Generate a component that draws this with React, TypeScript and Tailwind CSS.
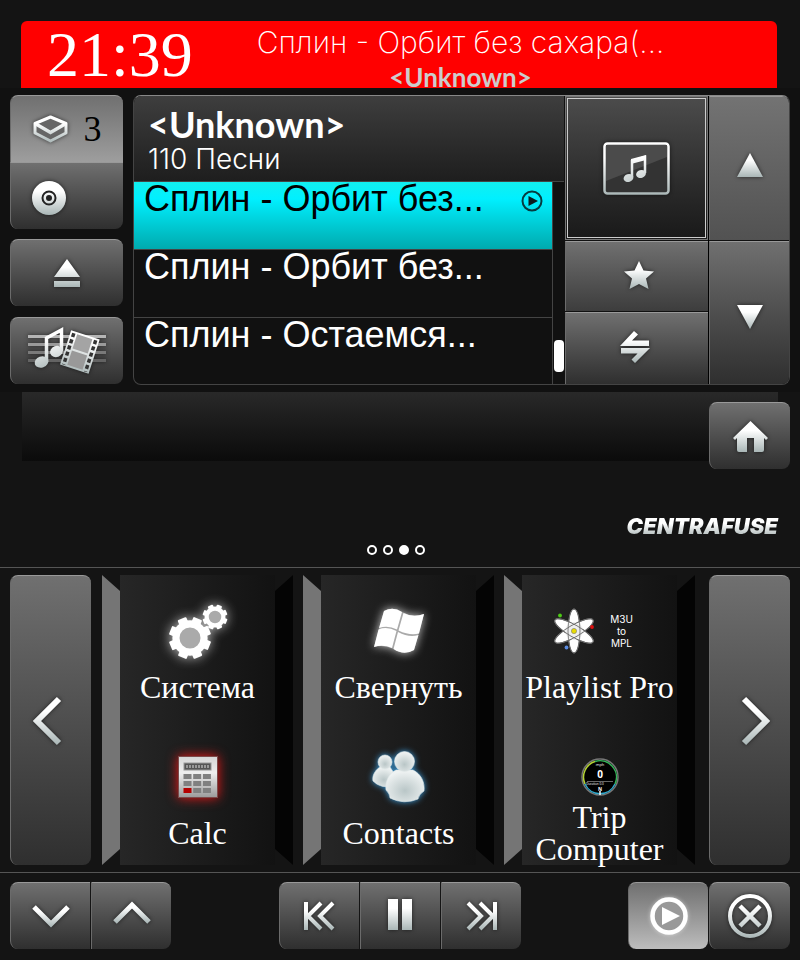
import { useId, useState, type ReactNode } from "react";
import clsx from "clsx";

interface IconProps {
  width: number;
  height: number;
  children: (paint: string) => ReactNode;
  className?: string;
}

// Light-to-steel vertical gradient shared by every control glyph
function Icon({ width, height, children, className }: IconProps) {
  const id = useId();
  return (
    <svg
      width={width}
      height={height}
      viewBox={`0 0 ${width} ${height}`}
      fill="none"
      aria-hidden="true"
      className={clsx("shrink-0 overflow-visible drop-shadow-[0_0_2px_#0009]", className)}
    >
      <defs>
        <linearGradient id={id} gradientUnits="userSpaceOnUse" x1="0" y1="0" x2="0" y2={height}>
          <stop offset="0.3" stopColor="#ffffff" />
          <stop offset="1" stopColor="#a9b6b6" />
        </linearGradient>
      </defs>
      {children(`url(#${id})`)}
    </svg>
  );
}

interface KeyProps {
  label: string;
  className?: string;
  onClick?: () => void;
  children: ReactNode;
}

function Key({ label, className, onClick, children }: KeyProps) {
  return (
    <button
      type="button"
      aria-label={label}
      onClick={onClick}
      className={clsx(
        "flex items-center justify-center border-t border-l border-t-[#999] border-l-[#6b6b6b] bg-linear-to-b from-[#707070] to-[#2f2f2f]",
        className,
      )}
    >
      {children}
    </button>
  );
}

function Gear({ cx, cy, r, teeth }: { cx: number; cy: number; r: number; teeth: number }) {
  return (
    <g>
      {Array.from({ length: teeth }, (_, i) => (
        <rect
          key={i}
          x={cx - r * 0.22}
          y={cy - r}
          width={r * 0.44}
          height={r * 0.5}
          rx="1"
          fill="#fff"
          transform={`rotate(${(i * 360) / teeth + 22} ${cx} ${cy})`}
        />
      ))}
      <circle cx={cx} cy={cy} r={r * 0.67} fill="#aaa" stroke="#fff" strokeWidth={r * 0.34} />
    </g>
  );
}

function GearsIcon() {
  return (
    <svg width="60" height="56" viewBox="0 0 60 56" aria-hidden="true" className="overflow-visible drop-shadow-[0_0_6px_#ffffffb0]">
      <Gear cx={22} cy={35} r={21} teeth={8} />
      <Gear cx={47} cy={14} r={12.5} teeth={8} />
    </svg>
  );
}

function FlagIcon() {
  return (
    <svg width="50" height="46" viewBox="0 0 50 46" aria-hidden="true" fill="#fff" className="overflow-visible drop-shadow-[0_0_5px_#ffffffc0]">
      <path d="M0 39L10 3Q19-2 28 4Q39 10 50 6L40 42Q30 48 20 41Q9 36 0 39Z" fill="#aaa" />
      <path d="M10 3Q19-2 28 4L23 21.500Q14 17 5 20Z" />
      <path d="M29.500 5Q39 10 50 6L45 25.500Q36 28 24.500 22.500Z" />
      <path d="M4.500 21.500Q13 18 22.500 23L18 40Q9 36 0 39Z" />
      <path d="M24 24Q35 30 44.500 27L40 42Q30 48 19.500 41Z" />
    </svg>
  );
}

function AtomIcon() {
  return (
    <svg width="40" height="46" viewBox="0 0 40 46" aria-hidden="true">
      {[0, 60, 120].map((angle) => (
        <ellipse key={angle} cx="20" cy="23" rx="6" ry="22" fill="#fff" stroke="#777" transform={`rotate(${angle} 20 23)`} />
      ))}
      <circle cx="20" cy="23" r="9" fill="#eee" />
      {[0, 60, 120].map((angle) => (
        <ellipse key={angle} cx="20" cy="23" rx="6" ry="22" fill="none" stroke="#666" strokeWidth="0.8" transform={`rotate(${angle} 20 23)`} />
      ))}
      <circle cx="20" cy="23" r="2.6" fill="#e8dc00" stroke="#777" strokeWidth="0.6" />
      <circle cx="6" cy="7.500" r="1.9" fill="#4ccc14" />
      <circle cx="38" cy="19" r="1.900" fill="#e01010" />
      <circle cx="12.500" cy="39.500" r="1.900" fill="#5b8be0" />
    </svg>
  );
}

function CalcIcon() {
  return (
    <svg width="40" height="42" viewBox="0 0 40 42" aria-hidden="true" className="overflow-visible drop-shadow-[0_0_6px_#f01818]">
      <defs>
        <linearGradient id="calc-body" x1="0" y1="0" x2="0" y2="1">
          <stop offset="0" stopColor="#d6d6d6" />
          <stop offset="0.4" stopColor="#efefef" />
          <stop offset="1" stopColor="#9b9b9b" />
        </linearGradient>
      </defs>
      <rect x="0.500" y="0.500" width="39" height="41" fill="url(#calc-body)" stroke="#7d4a4a" />
      <rect x="6" y="7" width="27" height="7" fill="#555" stroke="#999" />
      <path d="M8 10.500H31" stroke="#999" strokeWidth="3" strokeDasharray="2 1" />
      {[0, 1, 2].map((row) =>
        [0, 1, 2].map((col) => (
          <rect
            key={`${row}${col}`}
            x={5.5 + col * 9.7}
            y={18 + row * 7}
            width="8"
            height="5"
            fill={row === 2 && col === 0 ? "#b40000" : "#808080"}
          />
        )),
      )}
    </svg>
  );
}

function PeopleIcon() {
  return (
    <svg width="54" height="52" viewBox="0 0 54 52" aria-hidden="true" className="overflow-visible drop-shadow-[0_0_3px_#3d9fe0]">
      <defs>
        <radialGradient id="people-body" cx="0.5" cy="0.65" r="0.6">
          <stop offset="0" stopColor="#b9c6c7" />
          <stop offset="1" stopColor="#eef2f2" />
        </radialGradient>
      </defs>
      <g fill="url(#people-body)" stroke="#dfe7e8" strokeWidth="0.6">
        <path d="M8 16C2 20 0 26 1 30Q9 38 21 35Q26 26 18 16Z" />
        <circle cx="13" cy="11" r="7" />
        <path d="M24 19C16 23 13 32 14 39Q18 43 18 47Q32 54 46 48Q47 43 52 40C53 31 49 23 41 19Z" />
        <circle cx="32.500" cy="10.500" r="10" />
      </g>
    </svg>
  );
}

function GaugeIcon() {
  return (
    <svg width="38" height="40" viewBox="0 0 38 40" aria-hidden="true" fill="none">
      <circle cx="19" cy="20" r="18" fill="#000" stroke="#777" strokeWidth="1.5" />
      <path d="M4 27A16.500 16.500 0 0 1 14 4.500" stroke="#b5d334" strokeWidth="1.500" />
      <path d="M14 4.500A16.500 16.500 0 0 1 34 27" stroke="#35b558" strokeWidth="1.500" />
      <path d="M34 27A16.500 16.500 0 0 1 4 27" stroke="#2fa9cc" strokeWidth="1.500" />
      <path d="M6 24.500H32" stroke="#666" />
      <g fill="#fff" textAnchor="middle" fontFamily="Open Sans, sans-serif">
        <text x="19" y="9" fontSize="4">mph</text>
        <text x="19" y="21" fontSize="10" fontWeight="700">0</text>
        <text x="14" y="28" fontSize="3">Duration 0.0</text>
        <text x="19" y="34" fontSize="5" fontWeight="700">N</text>
      </g>
      <path d="M19 34V38" stroke="#fff" strokeWidth="1.500" />
    </svg>
  );
}

function MediaIcon() {
  return (
    <Icon width={78} height={48} className="mb-1">
      {(paint) => (
        <>
          <path d="M0 11.500H78" stroke="#b5b5b5" strokeWidth="3" />
          <path d="M0 19.500H78" stroke="#9a9a9a" strokeWidth="3" />
          <path d="M0 27.500H78" stroke="#7a7a7a" strokeWidth="3" />
          <path d="M0 35.500H78" stroke="#636363" strokeWidth="3" />
          <path d="M18.500 37V13L33.500 5V26" stroke={paint} strokeWidth="3.500" />
          <ellipse cx="13.500" cy="37" rx="7" ry="5.500" fill={paint} transform="rotate(-20 13.500 37)" />
          <ellipse cx="28.500" cy="26.500" rx="6.500" ry="5.500" fill={paint} transform="rotate(-20 28.500 26.500)" />
          <g transform="rotate(18 52 26.500)">
            <rect x="37" y="9" width="30" height="36" fill={paint} />
            <rect x="44" y="11" width="16" height="15" fill="#a4a4a4" />
            <rect x="44" y="28" width="16" height="15" fill="#999" />
            <path d="M40.500 11V44M63.500 11V44" stroke="#333" strokeWidth="3.500" strokeDasharray="4 2.500" />
          </g>
        </>
      )}
    </Icon>
  );
}

interface App {
  name: string;
  icon: ReactNode;
}

const TILES: App[][] = [
  [
    { name: "Система", icon: <GearsIcon /> },
    { name: "Calc", icon: <CalcIcon /> },
  ],
  [
    { name: "Свернуть", icon: <FlagIcon /> },
    { name: "Contacts", icon: <PeopleIcon /> },
  ],
  [
    {
      name: "Playlist Pro",
      icon: (
        <span className="flex items-center gap-4 pr-3">
          <AtomIcon />
          <span className="font-[Inter,sans-serif] text-[10px] leading-3">
            M3U
            <br />
            to
            <br />
            MPL
          </span>
        </span>
      ),
    },
    { name: "Trip Computer", icon: <GaugeIcon /> },
  ],
];

const TRACKS = ["Сплин - Орбит без...", "Сплин - Орбит без...", "Сплин - Остаемся..."];

function NowPlaying() {
  return (
    <header className="mt-[21px] mr-[23px] ml-[21px] flex h-[67px] rounded-t-md bg-[#f00] text-white">
      <time className="w-[190px] shrink-0 pl-[26px] text-[64px] leading-[68px]">21:39</time>
      <div className="mr-[67px] flex flex-1 flex-col items-center">
        <p className="font-[Inter,sans-serif] text-[30px] leading-[42px] font-extralight whitespace-nowrap">
          Сплин - Орбит без сахара(...
        </p>
        <p className="font-[Lato,sans-serif] text-[26px] leading-7 font-bold text-[#ccc]">&lt;Unknown&gt;</p>
      </div>
    </header>
  );
}

function SideKeys() {
  return (
    <nav className="flex w-[113px] shrink-0 flex-col gap-[10px]">
      <div>
        <Key label="Очередь" className="h-[67px] w-full gap-4 rounded-t-lg from-[#8a8a8a] to-[#9e9e9e]">
          <Icon width={35} height={28}>
            {(paint) => (
              <>
                <path d="M2 8.500L17.500 2L33 8.500V18L17.500 26L2 18Z" fill="#666" stroke={paint} strokeWidth="3" strokeLinejoin="round" />
                <path d="M2 8.500L17.500 17.500L33 8.500" stroke={paint} strokeWidth="3.500" />
              </>
            )}
          </Icon>
          <span className="text-4xl text-black">3</span>
        </Key>
        <Key label="Диск" className="h-[67px] w-full justify-start rounded-b-lg from-[#505050] pt-1 pl-[21px]">
          <Icon width={34} height={34}>
            {(paint) => (
              <>
                <circle cx="17" cy="17" r="17" fill={paint} />
                <circle cx="17" cy="17" r="6.500" stroke="#222" strokeWidth="2" />
                <circle cx="17" cy="17" r="3" fill="#222" />
              </>
            )}
          </Icon>
        </Key>
      </div>
      <Key label="Извлечь" className="h-[67px] rounded-lg">
        <Icon width={26} height={28}>
          {(paint) => <path d="M0 18L13 0L26 18ZM0 22H26V28H0Z" fill={paint} />}
        </Icon>
      </Key>
      <Key label="Медиа" className="mt-px h-[67px] rounded-lg">
        <MediaIcon />
      </Key>
    </nav>
  );
}

function TrackPanel() {
  const [selected, setSelected] = useState(0);

  return (
    <section className="flex h-[290px] flex-1 overflow-hidden rounded-lg border border-[#444] border-t-[#888]">
      <div className="flex min-w-0 flex-1 flex-col">
        <div className="h-[86px] border-b border-[#444] bg-linear-to-b from-[#3e3e3e] to-[#1e1e1e] pt-2 pl-[14px] text-white">
          <h1 className="font-[Lato,sans-serif] text-[36px] leading-10 font-bold">&lt;Unknown&gt;</h1>
          <p className="font-[Inter,sans-serif] text-[28px] leading-[30px] font-light">110 Песни</p>
        </div>
        <div className="flex flex-1">
          <ul className="flex-1 border-r border-[#444]">
            {TRACKS.map((track, i) => (
              <li key={i} className="h-[68px] border-b border-[#444] last:h-[66px] last:border-b-0">
                <button
                  type="button"
                  onClick={() => setSelected(i)}
                  className={clsx(
                    "flex h-full w-full items-start justify-between pr-[9px] pl-[10px] text-left font-['Liberation_Sans',sans-serif] text-4xl leading-[34px]",
                    i === selected ? "bg-linear-to-b from-[#12efef] from-0% via-[#00f0ff] via-25% to-[#00aaae] text-black" : "text-white",
                  )}
                >
                  <span className="whitespace-nowrap">{track}</span>
                  {i === selected && (
                    <svg width="22" height="22" viewBox="0 0 22 22" aria-hidden="true" className="mt-2">
                      <circle cx="11" cy="11" r="9.500" fill="none" stroke="#063c40" strokeWidth="2" />
                      <path d="M7.500 6L17 11L7.500 16Z" fill="#0b1d1f" />
                    </svg>
                  )}
                </button>
              </li>
            ))}
          </ul>
          <div className="flex w-[11px] flex-col justify-end pb-3 pl-px">
            <div className="h-8 rounded bg-white" />
          </div>
        </div>
      </div>

      <div className="flex w-36 flex-col border-l border-[#111]">
        <div className="flex h-36 items-center justify-center border border-[#777] bg-linear-to-b from-[#4c4c4c] to-[#191919] p-px">
          <div className="flex h-full w-full items-center justify-center border border-[#ccc]">
            <Icon width={67} height={53}>
              {(paint) => (
                <>
                  <rect x="1.500" y="1.500" width="64" height="50" rx="3" fill="#333" stroke={paint} strokeWidth="2.500" />
                  <path d="M3 39L64 15V3H3Z" fill="#4b4b4b" />
                  <path d="M29 35V19L42 15V31" stroke={paint} strokeWidth="2.500" />
                  <path d="M28 17L43 13V18L28 22Z" fill={paint} />
                  <ellipse cx="25.500" cy="36" rx="5" ry="4" fill={paint} transform="rotate(-18 25.500 36)" />
                  <ellipse cx="38" cy="32" rx="5" ry="4" fill={paint} transform="rotate(-18 38 32)" />
                </>
              )}
            </Icon>
          </div>
        </div>
        <Key label="Избранное" className="mt-px h-[70px] from-[#525252] to-[#3d3d3d]">
          <Icon width={30} height={28} className="mb-1 ml-1">
            {(paint) => (
              <path d="M15 0L19.500 9.500L30 10.500L22 17.500L24.500 28L15 23L5.500 28L8 17.500L0 10.500L10.500 9.500Z" fill={paint} />
            )}
          </Icon>
        </Key>
        <Key label="Перемешать" className="mt-px flex-1 from-[#404040]">
          <Icon width={30} height={32} className="mr-1 mb-1">
            {(paint) => (
              <path
                d="M0 15L14 0L18 3.500L12 9.500H29V15ZM30 17L15 32L11.500 28.500L17.500 22.500H1V17Z"
                fill={paint}
              />
            )}
          </Icon>
        </Key>
      </div>

      <div className="flex w-[81px] flex-col border-l border-black">
        <Key label="Вверх" className="h-36 from-[#737373] to-[#525252]">
          <Icon width={26} height={24} className="mb-2">
            {(paint) => <path d="M0 24L13 0L26 24Z" fill={paint} />}
          </Icon>
        </Key>
        <Key label="Вниз" className="mt-px flex-1 from-[#525252]">
          <Icon width={26} height={24} className="mt-2">
            {(paint) => <path d="M0 0H26L13 24Z" fill={paint} />}
          </Icon>
        </Key>
      </div>
    </section>
  );
}

function Tile({ apps }: { apps: App[] }) {
  return (
    <div className="h-[290px] min-w-0 flex-1 border-x-[18px] border-y-[16px] border-y-transparent border-l-[#757575] border-r-[#040404] bg-linear-to-r from-[#292929] to-[#101010] bg-origin-border">
      {apps.map((app) => (
        <button key={app.name} type="button" className="flex h-[146px] w-full flex-col items-center text-white">
          <span className="flex h-20 items-center">{app.icon}</span>
          <span
            className={clsx(
              "text-[32px] leading-8",
              app.name === "Trip Computer" ? "-mt-4" : "whitespace-nowrap",
            )}
          >
            {app.name}
          </span>
        </button>
      ))}
    </div>
  );
}

function Launcher() {
  return (
    <section className="flex gap-[10px] border-y border-[#555] px-[10px] py-[7px]">
      <Key label="Назад" className="mr-px w-[81px] rounded-lg">
        <Icon width={28} height={48} className="mr-2">
          {(paint) => <path d="M26 2L4 24L26 46" stroke={paint} strokeWidth="6" />}
        </Icon>
      </Key>
      {TILES.map((apps, i) => (
        <Tile key={i} apps={apps} />
      ))}
      <Key label="Далее" className="ml-1 w-[81px] rounded-lg">
        <Icon width={28} height={48} className="ml-3">
          {(paint) => <path d="M2 2L24 24L2 46" stroke={paint} strokeWidth="6" />}
        </Icon>
      </Key>
    </section>
  );
}

function Transport() {
  return (
    <footer className="flex justify-between px-[10px] pt-[9px] pb-[11px]">
      <div className="flex gap-px">
        <Key label="Тише" className="h-[67px] w-20 rounded-l-lg">
          <Icon width={38} height={22}>
            {(paint) => <path d="M2 2L19 19L36 2" stroke={paint} strokeWidth="5" />}
          </Icon>
        </Key>
        <Key label="Громче" className="h-[67px] w-20 rounded-r-lg">
          <Icon width={38} height={22} className="mb-2">
            {(paint) => <path d="M2 21L19 4L36 21" stroke={paint} strokeWidth="5" />}
          </Icon>
        </Key>
      </div>
      <div className="flex gap-px">
        <Key label="Предыдущий" className="h-[67px] w-20 rounded-l-lg">
          <Icon width={31} height={28}>
            {(paint) => <path d="M2 0V28M17 1L4 14L17 27M29 1L16 14L29 27" stroke={paint} strokeWidth="4" />}
          </Icon>
        </Key>
        <Key label="Пауза" className="h-[67px] w-20">
          <Icon width={24} height={31} className="mb-1">
            {(paint) => <path d="M0 0H10V31H0ZM14 0H24V31H14Z" fill={paint} />}
          </Icon>
        </Key>
        <Key label="Следующий" className="h-[67px] w-20 rounded-r-lg">
          <Icon width={31} height={28}>
            {(paint) => <path d="M29 0V28M2 1L15 14L2 27M14 1L27 14L14 27" stroke={paint} strokeWidth="4" />}
          </Icon>
        </Key>
      </div>
      <div className="flex gap-px">
        <Key label="Воспроизведение" className="h-[67px] w-20 rounded-lg from-[#8d8d8d] to-[#bdbdbd]">
          <svg width="38" height="38" viewBox="0 0 38 38" aria-hidden="true" className="overflow-visible drop-shadow-[0_0_2px_#ffffff80]">
            <circle cx="19" cy="19" r="16.500" fill="#999" stroke="#fff" strokeWidth="4.500" />
            <path d="M12 10L30 19L12 28Z" fill="#fff" />
          </svg>
        </Key>
        <Key label="Закрыть" className="h-[67px] w-[81px] rounded-lg">
          <Icon width={44} height={44}>
            {(paint) => (
              <>
                <circle cx="22" cy="22" r="20" stroke={paint} strokeWidth="4" />
                <path d="M12 12L32 32M32 12L12 32" stroke={paint} strokeWidth="4.500" />
              </>
            )}
          </Icon>
        </Key>
      </div>
    </footer>
  );
}

export default function App() {
  const [page, setPage] = useState(2);

  return (
    <main className="flex min-h-screen flex-col bg-[#141414] font-['Liberation_Serif',serif]">
      <NowPlaying />

      <div className="flex gap-[10px] bg-[#111] px-[10px] py-[7px]">
        <SideKeys />
        <TrackPanel />
      </div>

      <div className="mx-[22px] flex h-[69px] justify-end bg-linear-to-b from-[#292929] to-[#0b0b0b] pt-[10px]">
        <Key label="Домой" className="-mr-3 h-[67px] w-[81px] rounded-lg">
          <Icon width={35} height={31}>
            {(paint) => (
              <path d="M0 17L17.500 0L35 17L33 19L31 17V29Q31 31 29 31H21V17H14V31H6Q4 31 4 29V17L2 19Z" fill={paint} />
            )}
          </Icon>
        </Key>
      </div>

      <div className="mt-[53px] flex justify-end pr-[18px]">
        <span className="bg-linear-to-b from-white from-40% to-[#a4b0b0] bg-clip-text pr-1 font-[Inter,sans-serif] text-[22px] leading-6 font-black text-transparent italic">
          CENTRAFUSE
        </span>
      </div>

      <div className="mt-[7px] mb-3 flex justify-center gap-[6px] pr-2">
        {[0, 1, 2, 3].map((i) => (
          <button
            key={i}
            type="button"
            aria-label={`Страница ${i + 1}`}
            onClick={() => setPage(i)}
            className={clsx("size-[10px] rounded-full border-2 border-white", i === page && "bg-white")}
          />
        ))}
      </div>

      <Launcher />
      <Transport />
    </main>
  );
}
